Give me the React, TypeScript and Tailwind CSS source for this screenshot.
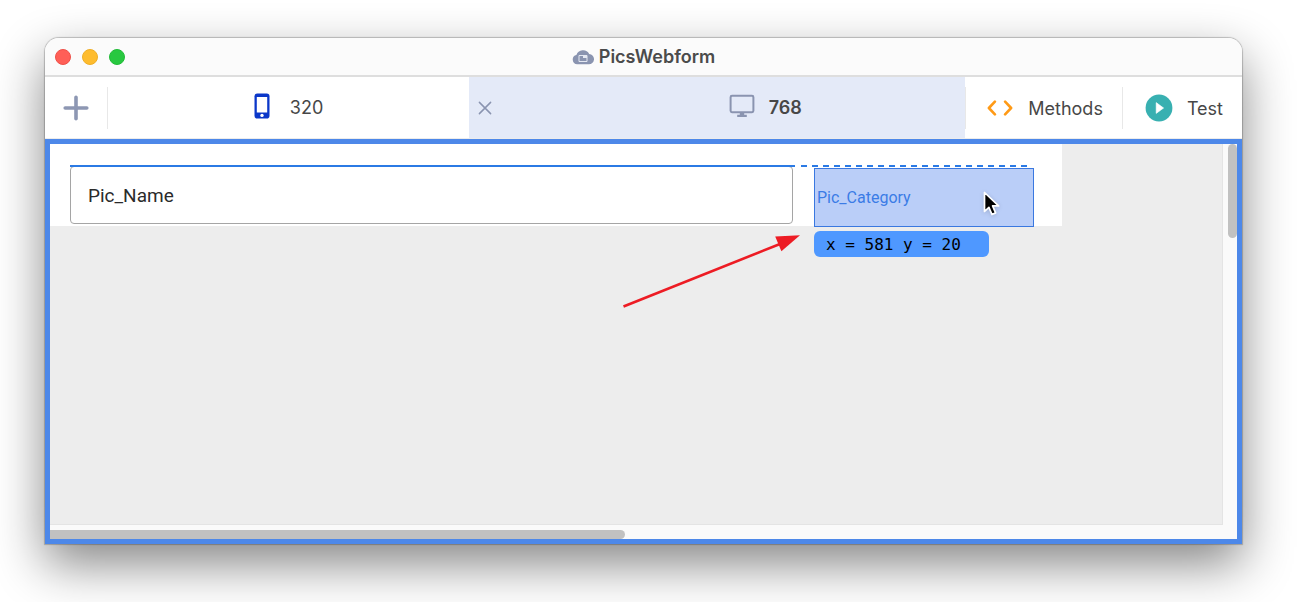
import React from 'react';

const CloudIcon = () => (
  <svg width="22" height="16" viewBox="0 0 22 16" fill="none">
    <path
      d="M5.2 15.2a4.6 4.6 0 0 1-.8-9.1A7 7 0 0 1 17.2 5a5.1 5.1 0 0 1-.6 10.2z"
      fill="#8a94b0"
    />
    <path d="M7 6.5h8v6H7z" stroke="#e4e8f2" strokeWidth="1" />
    <path d="M11 6.5h4v2.4h-4z" fill="#e4e8f2" />
  </svg>
);

const PlusIcon = () => (
  <svg width="26" height="26" viewBox="0 0 26 26" fill="none">
    <path d="M13 2.2v21.6M2.2 13h21.6" stroke="#8d97b3" strokeWidth="3.6" strokeLinecap="round" />
  </svg>
);

const PhoneIcon = () => (
  <svg width="16" height="26" viewBox="0 0 16 26">
    <rect x="0.5" y="0.5" width="15" height="25" rx="2.8" fill="#0b37c9" />
    <path d="M2.8 4h10.4v15.6H2.8z" fill="#fff" />
    <circle cx="8" cy="22.4" r="1.7" fill="#fff" />
  </svg>
);

const MonitorIcon = () => (
  <svg width="26" height="24" viewBox="0 0 26 24">
    <rect x="1.6" y="1.8" width="22.8" height="16.4" rx="1.4" fill="none" stroke="#8a94b0" strokeWidth="2" />
    <path d="M10.8 18.5h4.4v2.2h2.6v2.3H8.2v-2.3h2.6z" fill="#8a94b0" />
  </svg>
);

const CloseIcon = () => (
  <svg width="14" height="14" viewBox="0 0 14 14">
    <path d="M1.4 1.4l11.2 11.2M12.6 1.4L1.4 12.6" stroke="#8a94b0" strokeWidth="1.5" strokeLinecap="round" />
  </svg>
);

const CodeIcon = () => (
  <svg width="26" height="16" viewBox="0 0 26 16" fill="none">
    <path
      d="M7.9 1.6L1.9 8l6 6.4M18.1 1.6l6 6.4-6 6.4"
      stroke="#ff9a16"
      strokeWidth="2.6"
      strokeLinecap="round"
      strokeLinejoin="round"
    />
  </svg>
);

const PlayIcon = () => (
  <svg width="28" height="28" viewBox="0 0 28 28">
    <circle cx="14" cy="14" r="13.4" fill="#38b0b1" />
    <path d="M11.2 8.6v10.8l7.4-5.4z" fill="#fff" stroke="#fff" strokeWidth="0.6" strokeLinejoin="round" />
  </svg>
);

const CursorIcon = () => (
  <svg width="20" height="28" viewBox="0 0 20 28" className="drop-shadow-sm">
    <path
      d="M2.5 2.5v19l4.4-4.2 3.1 7.2 3.6-1.6-3-7h6z"
      fill="#000"
      stroke="#fff"
      strokeWidth="1.7"
      strokeLinejoin="round"
    />
  </svg>
);

const PointerArrow = () => (
  <svg width="180" height="76" viewBox="0 0 180 76">
    <path d="M3.5 72.5L160 10" stroke="#ed1c24" strokeWidth="2.6" />
    <path d="M180 1.2L155.2 2.4l6.2 14.8z" fill="#ed1c24" />
  </svg>
);

const TitleBar = () => (
  <header className="flex h-[39px] shrink-0 items-center border-b-2 border-[#dedede] bg-[#fbfbfb] px-[10px]">
    <div className="flex flex-1 gap-[11px]">
      <button aria-label="Close" className="size-4 rounded-full border border-[#ee5048] bg-[#ff5f57]" />
      <button aria-label="Minimize" className="size-4 rounded-full border border-[#eeae27] bg-[#febc2e]" />
      <button aria-label="Zoom" className="size-4 rounded-full border border-[#22bb38] bg-[#28c840]" />
    </div>
    <h1 className="flex items-center gap-[5px] text-lg/6 font-semibold text-[#4b4b4b]">
      <CloudIcon />
      PicsWebform
    </h1>
    <div className="flex-1" />
  </header>
);

const Toolbar = () => (
  <nav className="flex h-[62px] shrink-0 items-center border-b border-[#ececec] bg-white text-lg text-[#474747]">
    <button aria-label="Add size" className="flex h-[42px] w-[63px] items-center justify-center border-r border-[#e8e8e8]">
      <PlusIcon />
    </button>
    <button className="flex h-full flex-[361] items-center justify-center gap-5 pb-1">
      <PhoneIcon />
      <span className="pt-1">320</span>
    </button>
    <div className="flex h-full flex-[487] items-center bg-[#e4eaf8] pl-[9px] font-semibold">
      <button aria-label="Remove size">
        <CloseIcon />
      </button>
      <button className="flex h-full flex-1 items-center justify-center gap-[14px] pb-1 pl-[73px]">
        <MonitorIcon />
        <span className="pt-1">768</span>
      </button>
    </div>
    <button className="flex h-[42px] items-center gap-[15px] border-l border-[#e8e8e8] pl-[21px] pr-[19px]">
      <CodeIcon />
      <span className="pt-[2px]">Methods</span>
    </button>
    <button className="flex h-[42px] items-center gap-[14px] border-l border-[#e8e8e8] pl-[22px] pr-[19px]">
      <PlayIcon />
      <span className="pt-[2px]">Test</span>
    </button>
  </nav>
);

const Canvas = () => (
  <main className="grid min-h-0 flex-1 grid-cols-[1fr_14px] grid-rows-[1fr_14px] border-[5px] border-[#4d88e9] bg-[#fafafa]">
    <div className="relative overflow-hidden border-b border-r border-[#e4e4e4] bg-[#ededed]">
      <section className="h-[82px] w-[1012px] bg-white pl-5 pt-[22px]">
        <input
          aria-label="Pic_Name"
          defaultValue="Pic_Name"
          className="h-[58px] w-[723px] rounded-[4px] border border-[#a5a5a5] bg-white px-[17px] font-['Roboto',sans-serif] text-[19px] text-[#2b2b2b]"
        />
      </section>

      {/* alignment guide */}
      <div className="absolute left-5 top-[21px] h-[2px] w-[725px] bg-[#2b7ae4]" />
      <div className="absolute left-[751px] top-[21px] h-[2px] w-[228px] bg-[repeating-linear-gradient(90deg,#2b7ae4_0_6px,transparent_6px_11px)]" />

      {/* dragged field with its position */}
      <div className="absolute left-[764px] top-6 flex h-[59px] w-[220px] items-center border border-[#3a78e0] bg-[#bacef8] pl-[2px] font-['Roboto',sans-serif] text-base text-[#3b7ce6]">
        Pic_Category
      </div>
      <output className="absolute left-[764px] top-[87px] h-[26px] w-[175px] whitespace-pre rounded-md bg-[#4f98ff] pl-3 font-['DejaVu_Sans_Mono',monospace] text-base/7 text-black">
        x = 581 y = 20
      </output>
      <div className="absolute left-[932px] top-[46px]">
        <CursorIcon />
      </div>
      <div className="absolute left-[570px] top-[90px]">
        <PointerArrow />
      </div>
    </div>
    <div className="flex justify-end">
      <div className="h-[94px] w-[9px] rounded-full bg-[#c1c1c1]" />
    </div>
    <div className="flex items-end">
      <div className="h-[9px] w-[49%] rounded-r-full bg-[#c1c1c1]" />
    </div>
  </main>
);

const App: React.FC = () => {
  return (
    <div className="flex h-screen flex-col overflow-hidden bg-white pb-[58px] pl-[45px] pr-14 pt-[38px] font-['Inter',sans-serif]">
      <div className="flex min-h-0 flex-1 flex-col rounded-t-[14px] shadow-[0_0_1px_1px_rgba(0,0,0,0.22),0_20px_50px_rgba(0,0,0,0.48)]">
        <div className="flex min-h-0 flex-1 flex-col overflow-hidden rounded-t-[14px]">
          <TitleBar />
          <Toolbar />
          <Canvas />
        </div>
      </div>
    </div>
  );
};

export default App;
